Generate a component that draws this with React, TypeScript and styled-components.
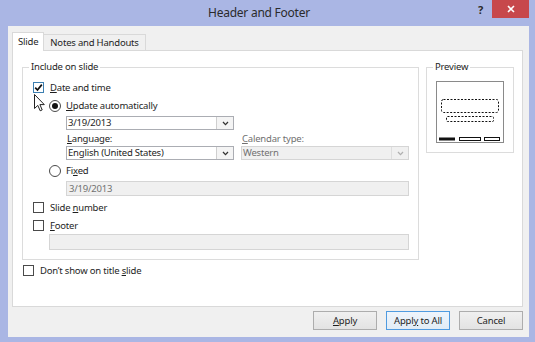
import React from 'react';
import styled, { createGlobalStyle } from 'styled-components';

const Global = createGlobalStyle`
  html, body { margin: 0; padding: 0; background: #ffffff; }
  body { font-family: "Noto Sans", "Segoe UI", sans-serif; }
`;

const Window = styled.div`
  position: relative;
  width: 535px;
  height: 342px;
  background: #aab6e4;
  display: flex;
  flex-direction: column;
  box-sizing: border-box;
  font-family: "Noto Sans", "Segoe UI", sans-serif;
  font-size: 9.5px;
  letter-spacing: -0.2px;
  color: #1e1e1e;
`;

const TitleBar = styled.div`
  height: 26px;
  flex: none;
  display: grid;
  grid-template-columns: 1fr auto 1fr;
  align-items: start;
  padding-right: 6px;
`;

const Title = styled.div`
  grid-column: 2;
  margin-right: 11px;
  font-size: 12px;
  line-height: 26px;
  color: #2b2b2b;
  letter-spacing: -0.25px;
`;

const Controls = styled.div`
  grid-column: 3;
  justify-self: end;
  display: flex;
  align-items: flex-start;
  gap: 9px;
`;

const HelpButton = styled.span`
  font-size: 11px;
  font-weight: bold;
  color: #2a2a2a;
  line-height: 20px;
`;

const CloseButton = styled.div`
  width: 37px;
  height: 18px;
  background: #c7484b;
  display: flex;
  align-items: center;
  justify-content: center;
`;

const Client = styled.div`
  flex: 1;
  margin: 0 6px 5px 8px;
  background: #f0f0f0;
  display: flex;
  flex-direction: column;
  padding: 6px 6px 0 4px;
  box-sizing: border-box;
`;

const TabRow = styled.div`
  display: flex;
  align-items: flex-end;
  height: 18px;
`;

const Tab = styled.div<{ $active?: boolean; $pad: number }>`
  box-sizing: border-box;
  height: ${p => (p.$active ? 19 : 16)}px;
  margin-bottom: ${p => (p.$active ? -1 : 0)}px;
  margin-left: ${p => (p.$active ? 0 : -1)}px;
  padding: ${p => (p.$active ? 2 : 1)}px ${p => p.$pad}px 0;
  border: 1px solid #d9d9d9;
  border-bottom: none;
  background: ${p => (p.$active ? '#ffffff' : '#f0f0f0')};
  position: relative;
  z-index: ${p => (p.$active ? 1 : 0)};
  line-height: 13px;
  white-space: nowrap;
`;

const Panel = styled.div`
  box-sizing: border-box;
  height: 257px;
  background: #ffffff;
  border: 1px solid #d9d9d9;
  display: flex;
  align-items: flex-start;
  gap: 7px;
  padding: 16px 7px 0 9px;
`;

const LeftColumn = styled.div`
  display: flex;
  flex-direction: column;
`;

const Group = styled.div<{ $w: number }>`
  position: relative;
  box-sizing: border-box;
  width: ${p => p.$w}px;
  padding: 0 0 9px 0;
  border: 1px solid #dcdcdc;
  display: flex;
  flex-direction: column;
`;

const GroupCaption = styled.span`
  position: absolute;
  top: -8px;
  left: 6px;
  padding: 0 2px;
  background: #ffffff;
  line-height: 14px;
  white-space: nowrap;
`;

const Row = styled.div<{ $indent: number; $mt: number }>`
  display: flex;
  align-items: center;
  height: 15px;
  margin-top: ${p => p.$mt}px;
  margin-left: ${p => p.$indent}px;
  white-space: nowrap;
`;

const U = styled.span`
  text-decoration: underline;
  text-underline-offset: 1px;
`;

const CheckBox = styled.span<{ $hover?: boolean }>`
  box-sizing: border-box;
  width: 11px;
  height: 11px;
  flex: none;
  margin-right: 6px;
  border: 1px solid ${p => (p.$hover ? '#3c7fb1' : '#4a4a4a')};
  background: #ffffff;
  display: inline-flex;
  align-items: center;
  justify-content: center;
`;

const Radio = styled.span<{ $on?: boolean }>`
  box-sizing: border-box;
  width: 12px;
  height: 12px;
  flex: none;
  margin-right: 5px;
  border-radius: 50%;
  border: 1px solid #4a4a4a;
  background: #ffffff;
  display: inline-flex;
  align-items: center;
  justify-content: center;
  &::after {
    content: '';
    width: 6px;
    height: 6px;
    border-radius: 50%;
    background: ${p => (p.$on ? '#111111' : 'transparent')};
  }
`;

const FieldGrid = styled.div<{ $mt: number }>`
  display: grid;
  grid-template-columns: 168px 168px;
  grid-template-rows: 14px 14px;
  column-gap: 7px;
  margin-top: ${p => p.$mt}px;
  margin-left: 43px;
`;

const FieldLabel = styled.span<{ $disabled?: boolean }>`
  line-height: 14px;
  padding-left: 1px;
  color: ${p => (p.$disabled ? '#707070' : '#1e1e1e')};
  white-space: nowrap;
`;

const Combo = styled.div<{ $w?: number; $disabled?: boolean; $mt?: number; $indent?: number }>`
  box-sizing: border-box;
  width: ${p => (p.$w ? `${p.$w}px` : 'auto')};
  height: 14px;
  margin-top: ${p => p.$mt ?? 0}px;
  margin-left: ${p => p.$indent ?? 0}px;
  border: 1px solid ${p => (p.$disabled ? '#d5d5d5' : '#abadb3')};
  background: ${p => (p.$disabled ? '#f0f0f0' : '#ffffff')};
  display: flex;
  align-items: stretch;
`;

const ComboText = styled.span<{ $disabled?: boolean }>`
  flex: 1;
  padding-left: 1px;
  line-height: 12px;
  color: ${p => (p.$disabled ? '#707070' : '#1e1e1e')};
  white-space: nowrap;
`;

const DropButton = styled.span<{ $disabled?: boolean }>`
  width: 16px;
  flex: none;
  border-left: 1px solid ${p => (p.$disabled ? '#dedede' : '#cfcfcf')};
  background: ${p => (p.$disabled ? '#f0f0f0' : '#f4f4f4')};
  display: flex;
  align-items: center;
  justify-content: center;
`;

const TextBox = styled.div<{ $w: number; $h: number; $mt: number; $indent: number }>`
  box-sizing: border-box;
  width: ${p => p.$w}px;
  height: ${p => p.$h}px;
  margin-top: ${p => p.$mt}px;
  margin-left: ${p => p.$indent}px;
  border: 1px solid #d5d5d5;
  background: #f0f0f0;
  color: #707070;
  padding-left: 2px;
  line-height: ${p => p.$h - 2}px;
`;

const PreviewFrame = styled.div`
  margin: 13px 0 0 9px;
  width: 68px;
  height: 62px;
  display: flex;
`;

const ButtonRow = styled.div`
  display: flex;
  justify-content: flex-end;
  gap: 9px;
  margin-top: 4px;
`;

const Button = styled.button<{ $default?: boolean }>`
  box-sizing: border-box;
  width: 64px;
  height: 19px;
  padding: 0;
  font: inherit;
  letter-spacing: inherit;
  color: #1e1e1e;
  border: 1px solid ${p => (p.$default ? '#4f9be0' : '#adadad')};
  background: ${p => (p.$default ? 'linear-gradient(#eef5fc, #e2ecf6)' : 'linear-gradient(#f0f0f0, #e3e3e3)')};
`;

const Cursor = styled.svg`
  position: absolute;
  left: 34px;
  top: 94px;
`;

const Chevron: React.FC<{ color: string }> = ({ color }) => (
  <svg width="7" height="5" viewBox="0 0 7 5">
    <path d="M1 1 L3.5 3.6 L6 1" fill="none" stroke={color} strokeWidth="1.3" />
  </svg>
);

const Check = () => (
  <svg width="9" height="9" viewBox="0 0 9 9">
    <path d="M1.2 4.6 L3.5 7 L7.8 1.6" fill="none" stroke="#111" strokeWidth="1.7" />
  </svg>
);

const PreviewDrawing = () => (
  <svg width="68" height="62" viewBox="0 0 68 62">
    <rect x="0.5" y="0.5" width="67" height="61" fill="#fff" stroke="#8a8a8a" />
    <rect x="5.5" y="18.5" width="57" height="13" rx="2" fill="none" stroke="#111" strokeDasharray="2 1.5" />
    <rect x="10.5" y="35.5" width="47" height="5" rx="1" fill="none" stroke="#111" strokeDasharray="2 1.5" />
    <rect x="3" y="56.5" width="16" height="3" fill="#111" />
    <rect x="23.5" y="56.5" width="21" height="3" fill="#fff" stroke="#111" />
    <rect x="48.5" y="56.5" width="15" height="3" fill="#fff" stroke="#111" />
  </svg>
);

export default function App() {
  return (
    <>
      <Global />
      <Window>
        <TitleBar>
          <Title>Header and Footer</Title>
          <Controls>
            <HelpButton>?</HelpButton>
            <CloseButton>
              <svg width="8" height="8" viewBox="0 0 8 8">
                <path d="M1 1 L7 7 M7 1 L1 7" stroke="#fff" strokeWidth="1.6" />
              </svg>
            </CloseButton>
          </Controls>
        </TitleBar>
        <Client>
          <TabRow>
            <Tab $active $pad={5}>Slide</Tab>
            <Tab $pad={6}>Notes and Handouts</Tab>
          </TabRow>
          <Panel>
            <LeftColumn>
              <Group $w={397}>
                <GroupCaption>Include on slide</GroupCaption>
                <Row $indent={10} $mt={12}>
                  <CheckBox $hover><Check /></CheckBox>
                  <span><U>D</U>ate and time</span>
                </Row>
                <Row $indent={26} $mt={3}>
                  <Radio $on />
                  <span><U>U</U>pdate automatically</span>
                </Row>
                <Combo $w={168} $mt={3} $indent={43}>
                  <ComboText>3/19/2013</ComboText>
                  <DropButton><Chevron color="#333" /></DropButton>
                </Combo>
                <FieldGrid $mt={2}>
                  <FieldLabel><U>L</U>anguage:</FieldLabel>
                  <FieldLabel $disabled><U>C</U>alendar type:</FieldLabel>
                  <Combo>
                    <ComboText>English (United States)</ComboText>
                    <DropButton><Chevron color="#333" /></DropButton>
                  </Combo>
                  <Combo $disabled>
                    <ComboText $disabled>Western</ComboText>
                    <DropButton $disabled><Chevron color="#b0b0b0" /></DropButton>
                  </Combo>
                </FieldGrid>
                <Row $indent={26} $mt={3}>
                  <Radio />
                  <span>Fi<U>x</U>ed</span>
                </Row>
                <TextBox $w={343} $h={15} $mt={3} $indent={43}>3/19/2013</TextBox>
                <Row $indent={10} $mt={4}>
                  <CheckBox />
                  <span>Slide <U>n</U>umber</span>
                </Row>
                <Row $indent={10} $mt={3}>
                  <CheckBox />
                  <span><U>F</U>ooter</span>
                </Row>
                <TextBox $w={360} $h={16} $mt={1} $indent={26} />
              </Group>
              <Row $indent={1} $mt={3}>
                <CheckBox />
                <span>Don’t show on title <U>s</U>lide</span>
              </Row>
            </LeftColumn>
            <Group $w={88}>
              <GroupCaption>Preview</GroupCaption>
              <PreviewFrame><PreviewDrawing /></PreviewFrame>
            </Group>
          </Panel>
          <ButtonRow>
            <Button><U>A</U>pply</Button>
            <Button $default>Appl<U>y</U> to All</Button>
            <Button>Cancel</Button>
          </ButtonRow>
        </Client>
        <Cursor width="12" height="18" viewBox="0 0 12 18">
          <path d="M0.5 0.5 L0.5 14.5 L3.8 11.4 L6.2 16.8 L8.2 15.9 L5.9 10.6 L10.3 10.6 Z" fill="#fff" stroke="#222" strokeWidth="1" strokeLinejoin="round" />
        </Cursor>
      </Window>
    </>
  );
}
